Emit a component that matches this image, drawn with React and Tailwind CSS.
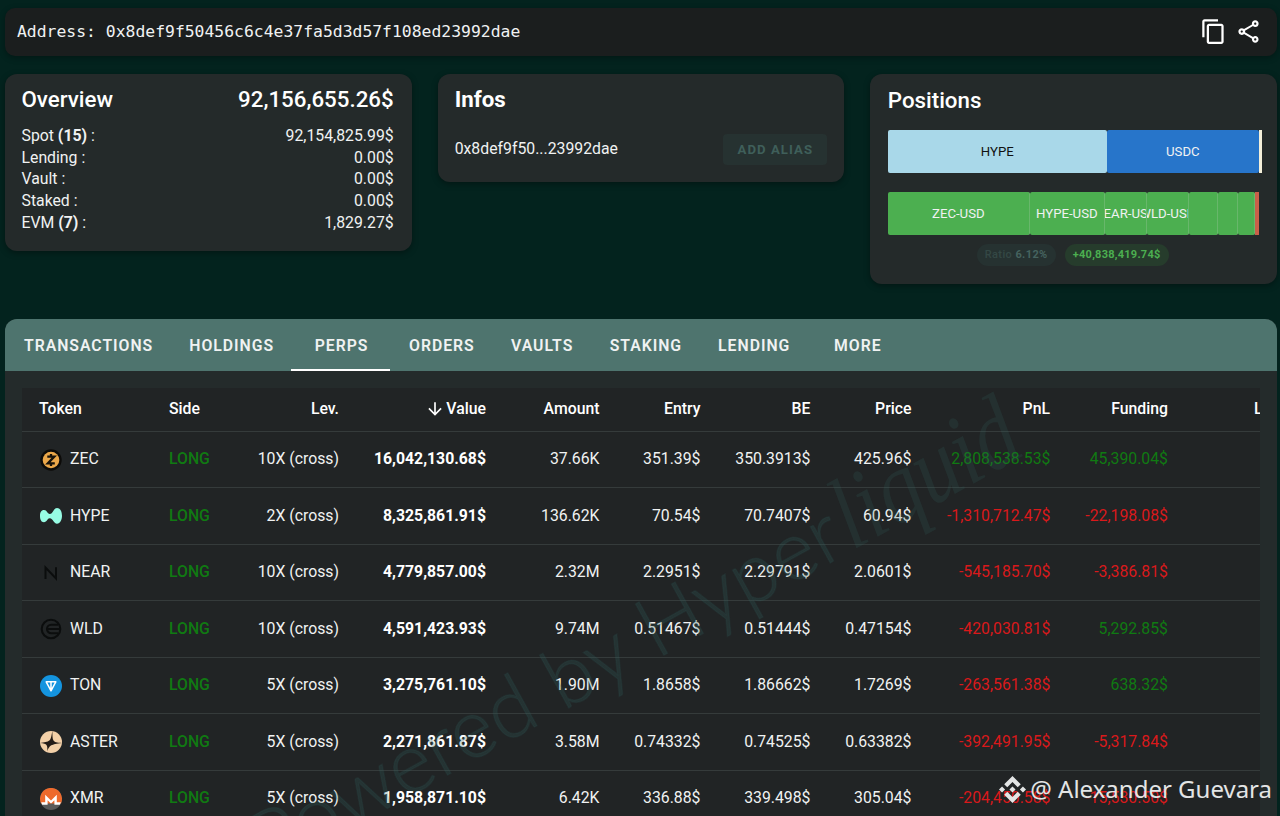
import { MdArrowDownward, MdContentCopy, MdOutlineShare } from "react-icons/md";
import { SiBinance } from "react-icons/si";

const overview = [
  { label: "Spot", count: 15, value: "92,154,825.99$" },
  { label: "Lending", value: "0.00$" },
  { label: "Vault", value: "0.00$" },
  { label: "Staked", value: "0.00$" },
  { label: "EVM", count: 7, value: "1,829.27$" },
];

const perpBars = [
  { name: "ZEC-USD", width: "w-[142px]" },
  { name: "HYPE-USD", width: "w-[75px]" },
  { name: "NEAR-USD", width: "w-[42px]" },
  { name: "WLD-USD", width: "w-[42px]" },
  { name: "", width: "w-[29px]" },
  { name: "", width: "w-[20px]" },
  { name: "", width: "w-[17px]" },
];

const tabs = [
  "TRANSACTIONS",
  "HOLDINGS",
  "PERPS",
  "ORDERS",
  "VAULTS",
  "STAKING",
  "LENDING",
  "MORE",
];

const perps = [
  ["ZEC", "10X", "16,042,130.68$", "37.66K", "351.39$", "350.3913$", "425.96$", "2,808,538.53$", "45,390.04$"],
  ["HYPE", "2X", "8,325,861.91$", "136.62K", "70.54$", "70.7407$", "60.94$", "-1,310,712.47$", "-22,198.08$"],
  ["NEAR", "10X", "4,779,857.00$", "2.32M", "2.2951$", "2.29791$", "2.0601$", "-545,185.70$", "-3,386.81$"],
  ["WLD", "10X", "4,591,423.93$", "9.74M", "0.51467$", "0.51444$", "0.47154$", "-420,030.81$", "5,292.85$"],
  ["TON", "5X", "3,275,761.10$", "1.90M", "1.8658$", "1.86662$", "1.7269$", "-263,561.38$", "638.32$"],
  ["ASTER", "5X", "2,271,861.87$", "3.58M", "0.74332$", "0.74525$", "0.63382$", "-392,491.95$", "-5,317.84$"],
  ["XMR", "5X", "1,958,871.10$", "6.42K", "336.88$", "339.498$", "305.04$", "-204,450.58$", "-15,530.50$"],
];

const rowGrid =
  "grid grid-cols-[130px_88px_116px_147px_114px_101px_110px_101px_139px_117px_160px] items-center border-b border-[#353b3b]";

const TokenIcon = ({ name }) => (
  <svg viewBox="0 0 22 22" className="size-[22px]">
    {name === "ZEC" && (
      <>
        <circle cx="11" cy="11" r="10.7" fill="#0c0b09" />
        <circle cx="11" cy="11" r="8.3" fill="#eba749" />
        <path d="M7.3 7.6h7L7.8 14.4h7M11 5v2.6M11 14.4V17" fill="none" stroke="#17120a" strokeWidth="2.3" />
      </>
    )}
    {name === "HYPE" && (
      <path
        d="M22 10.8c0 4.2-1.9 7.9-5 7.9-3.4 0-3.9-5.2-7.2-5.4-2.5-.1-2.7 3.9-5.9 3.9C1.2 17.2 0 14.4 0 11s1.2-5.9 4-5.9c3.1 0 3.3 3.9 5.8 3.9 3.3-.1 3.8-6.1 7.2-6.1 3.2 0 5 3.7 5 7.9z"
        fill="#97fce4"
      />
    )}
    {name === "NEAR" && (
      <path d="M5.5 17V5.5L16 16.5V5.3" fill="none" stroke="#0b0d0d" strokeWidth="2" />
    )}
    {name === "WLD" && (
      <g fill="none" stroke="#0b0d0d" strokeWidth="2.1">
        <circle cx="11" cy="11" r="9.3" />
        <path d="M18 6.8H11.2a4.2 4.2 0 0 0 0 8.4H18M7 11h13" />
      </g>
    )}
    {name === "TON" && (
      <>
        <circle cx="11" cy="11" r="11" fill="#1494df" />
        <path d="M6.2 6.8h9.6L11 15.8zM11 7v8.5" fill="none" stroke="#fff" strokeWidth="1.5" strokeLinejoin="round" />
      </>
    )}
    {name === "ASTER" && (
      <>
        <circle cx="11" cy="11" r="11" fill="#f3d0a8" />
        <path
          d="M12.3 0c-.9 5.500-1.300 8-3 9.600-1.800 1.500-4.900 2-9.300 2.300 4 .3 5.600.8 6.500 2 .9 1.300 1.100 3.500.5 6.300 1.300-2.800 2.200-4.600 4.300-5.900 2.100-1.200 5-1.500 10.600-2.400-5.300-.3-7.300-.9-8.400-2.500C12.300 7.700 12.600 5 12.300 0z"
          fill="#241c17"
        />
      </>
    )}
    {name === "XMR" && (
      <>
        <circle cx="11" cy="11" r="11" fill="#5a5a5a" />
        <path d="M1 15.5a11 11 0 1 1 20 0z" fill="#ee6a2c" />
        <path d="M1.2 14.2h4V6.8l5.8 5.6 5.8-5.6v7.4h4l-1 2.6h-5.4v-4.600L11 15.600l-3.400-3.400v4.600H2.200z" fill="#fff" />
      </>
    )}
  </svg>
);

const amountColor = (value) =>
  value.startsWith("-") ? "text-[#d9191b]" : "text-[#107a12]";

const Header = () => (
  <div className="flex h-12 items-center justify-between rounded-[10px] bg-[#1b1e1e] pr-[15px] pl-3 shadow-[0_2px_6px_rgba(0,0,0,0.3)]">
    <div className="font-['DejaVu_Sans_Mono',monospace] text-[16.4px] whitespace-pre">
      Address: 0x8def9f50456c6c4e37fa5d3d57f108ed23992dae
    </div>
    <div className="flex gap-2 pb-px text-[27px] text-white">
      <MdContentCopy />
      <MdOutlineShare />
    </div>
  </div>
);

const Overview = () => (
  <div className="h-[177px] rounded-xl bg-[#242a2a] pt-[10px] pr-[18px] pl-[16.5px] shadow-[0_2px_6px_rgba(0,0,0,0.35)]">
    <div className="flex h-[30px] items-center justify-between pt-px text-[22.3px] font-medium text-white">
      <h2>Overview</h2>
      <span>92,156,655.26$</span>
    </div>
    <div className="mt-[11px]">
      {overview.map((cur) => (
        <div key={cur.label} className="flex h-[21.7px] items-center justify-between text-[15.8px]">
          <span>
            {cur.label} {cur.count && <b>({cur.count})</b>} :
          </span>
          <span>{cur.value}</span>
        </div>
      ))}
    </div>
  </div>
);

const Infos = () => (
  <div className="h-[108px] rounded-xl bg-[#242a2a] px-[17px] pt-[10px] shadow-[0_2px_6px_rgba(0,0,0,0.35)]">
    <h2 className="flex h-[30px] items-center pt-px text-[22.3px] font-bold text-white">Infos</h2>
    <div className="mt-5 flex h-[31px] items-center justify-between">
      <span className="pb-[2px] text-[15.8px]">0x8def9f50...23992dae</span>
      <button className="h-[31px] w-[104px] rounded bg-[#263231] text-[13.2px] font-bold tracking-[1.05px] text-[#3f5f5a]">
        ADD ALIAS
      </button>
    </div>
  </div>
);

const Positions = () => (
  <div className="h-[210px] rounded-xl bg-[#242a2a] px-[17.5px] pt-3 shadow-[0_2px_6px_rgba(0,0,0,0.35)]">
    <h2 className="flex h-[30px] items-center text-[22.3px] font-medium text-white">Positions</h2>
    <div className="mt-[14px] flex h-[43px] text-[13.2px]">
      <div className="flex w-[219px] shrink-0 items-center justify-center rounded-[2px] bg-[#a9d8e9] text-[#111]">HYPE</div>
      <div className="flex w-[152px] shrink-0 items-center justify-center rounded-[2px] bg-[#2775ca]">USDC</div>
      <div className="w-[3px] shrink-0 bg-[#f3efd9]"></div>
    </div>
    <div className="mt-[19px] flex h-[43px] text-[13.2px]">
      {perpBars.map((cur, idx) => (
        <div
          key={idx}
          className={`flex shrink-0 items-center justify-center overflow-hidden rounded-[2px] border-r border-[#68b76b] bg-[#4caf50] ${cur.width}`}
        >
          {cur.name && <span className="whitespace-nowrap">{cur.name}</span>}
        </div>
      ))}
      <div className="w-1 bg-[#c95f49]"></div>
    </div>
    <div className="mt-[9px] flex justify-center gap-[9px] pr-[2px] text-[11px] font-bold tracking-[0.4px]">
      <span className="flex h-[22px] w-[79px] items-center justify-center rounded-full bg-[#263231] whitespace-pre text-[#45635f]">
        <span className="font-medium text-[#344845]">Ratio </span>6.12%
      </span>
      <span className="flex h-[22px] w-[104px] items-center justify-center rounded-full bg-[#263c2c] tracking-[0.25px] text-[#4caf50]">
        +40,838,419.74$
      </span>
    </div>
  </div>
);

const PerpsTable = () => (
  <div className="mx-[17px] mt-[17px] overflow-hidden bg-[#212425]">
    <div className={`${rowGrid} h-[43.5px] w-[1323px] text-right text-[15.8px] font-medium text-white`}>
      <span className="pl-[17px] text-left">Token</span>
      <span className="pl-[17px] text-left">Side</span>
      <span className="pr-[17px]">Lev.</span>
      <span className="flex items-center justify-end pr-[17px]">
        <MdArrowDownward className="text-[20px]" />
        <span className="ml-px">Value</span>
      </span>
      <span className="pr-[17.5px]">Amount</span>
      <span className="pr-[17.5px]">Entry</span>
      <span className="pr-[17.5px]">BE</span>
      <span className="pr-[17.5px]">Price</span>
      <span className="pr-[18px]">PnL</span>
      <span className="pr-[17px]">Funding</span>
      <span className="pl-[69px] text-left">Liq. Price</span>
    </div>
    {perps.map(([name, lev, value, amount, entry, be, price, pnl, funding]) => (
      <div key={name} className={`${rowGrid} h-[56.5px] w-[1323px] text-right text-[15.8px]`}>
        <span className="flex items-center pl-[17.5px] text-left">
          <span className="mt-px mr-[8.5px]">
            <TokenIcon name={name} />
          </span>
          {name}
        </span>
        <span className="pl-[17px] text-left font-medium text-[#107a12]">LONG</span>
        <span className="pr-[17px]">{lev} (cross)</span>
        <span className="pr-[17px] font-bold text-white">{value}</span>
        <span className="pr-[17.5px]">{amount}</span>
        <span className="pr-[17.5px]">{entry}</span>
        <span className="pr-[17.5px]">{be}</span>
        <span className="pr-[17.5px]">{price}</span>
        <span className={`pr-[17.5px] ${amountColor(pnl)}`}>{pnl}</span>
        <span className={`pr-[17px] ${amountColor(funding)}`}>{funding}</span>
        <span></span>
      </div>
    ))}
  </div>
);

const Watermark = () => (
  <svg className="pointer-events-none absolute inset-0 h-[816px] w-[1280px]" viewBox="0 0 1280 816">
    <g transform="translate(850 552) rotate(-29)" fill="#33655f">
      <text
        textAnchor="end"
        fontFamily="Lato"
        fontWeight="300"
        fontSize="83"
        fillOpacity="0.24"
        stroke="#33655f"
        strokeOpacity="0.12"
        strokeWidth="1.5"
      >
        Powered by Hyper
      </text>
      <text
        x="3"
        fontFamily="Liberation Serif"
        fontStyle="italic"
        fontSize="102"
        textLength="200"
        lengthAdjust="spacingAndGlyphs"
        fillOpacity="0.2"
      >
        liquid
      </text>
    </g>
  </svg>
);

const App = () => {
  return (
    <div className="relative h-[816px] w-[1280px] overflow-hidden bg-[#03231e] pt-2 pr-[3px] pl-[5px] font-[Roboto,sans-serif] text-[#f0f2f2]">
      <Header />

      <div className="mt-[18px] grid h-[210px] grid-cols-3 items-start gap-[26px]">
        <Overview />
        <Infos />
        <Positions />
      </div>

      <div className="mt-[35px] h-[520px] overflow-hidden rounded-t-xl bg-[#242b2b]">
        <div className="flex h-[52px] bg-[#4e746e]">
          {tabs.map((cur) => (
            <div
              key={cur}
              className={`flex min-w-[99px] items-center justify-center border-b-2 pt-[3px] pr-[17px] pl-[19px] text-[15.8px] font-semibold tracking-[0.97px] ${
                cur === "PERPS" ? "border-white" : "border-transparent"
              }`}
            >
              {cur}
            </div>
          ))}
        </div>
        <PerpsTable />
      </div>

      <Watermark />

      <div className="absolute right-2 bottom-[9px] flex items-center text-[24px] text-[#e3e5e5]">
        <SiBinance className="mr-1 text-[27px]" />
        <span className="font-['Noto_Sans',sans-serif] whitespace-nowrap">@ Alexander Guevara</span>
      </div>
    </div>
  );
};

export default App;
